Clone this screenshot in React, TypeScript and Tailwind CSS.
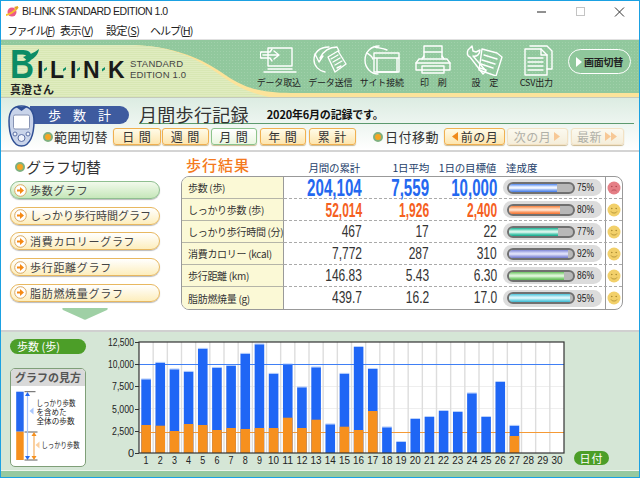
import React from "react";

const SANS = "font-['Noto_Sans_CJK_JP','Liberation_Sans',sans-serif]";

function Bullet() {
  return <span className="block w-[10px] h-[10px] rounded-full border-2 border-[#7fb07f] bg-[#f5a623] shrink-0" />;
}

function TopIcon({ name }: { name: string }) {
  const p = { fill: "none", stroke: "#ffffff", strokeWidth: 1.4, strokeLinejoin: "round" as const, strokeLinecap: "round" as const };
  return (
    <svg width="38" height="32" viewBox="0 0 38 32" className="block">
      {name === "in" && (
        <g {...p}>
          <path d="M8 4h24v18H8z" />
          <path d="M4 28h32M8 25h24" />
          <path d="M1 8h9l2-3M1 14h9l2 3" />
          <path d="M3 11h15M14 7l5 4-5 4" />
          <path d="M1 8c-1 2-1 4 0 6" />
        </g>
      )}
      {name === "out" && (
        <g {...p}>
          <path d="M18 3c-10 0-15 6-15 13 0 6 5 11 11 12" />
          <path d="M4 10l4 8 4-6M9 14c3-6 9-11 17-11l2 4" />
          <path d="M17 13l10-6 8 13-11 8z" />
          <path d="M20 15l7-4M22 18l7-4M24 21l7-4M26 24l4-2" />
        </g>
      )}
      {name === "site" && (
        <g {...p}>
          <path d="M16 2C8 2 2 8 2 16s6 14 13 14" />
          <path d="M4 9c3 2 5 3 6 6M12 3c3 1 8 1 12 3" />
          <path d="M11 9h25v19H11z" />
          <path d="M11 14h25M14 14v14h20V14" />
        </g>
      )}
      {name === "print" && (
        <g {...p}>
          <path d="M10 14V2h18v12" />
          <path d="M10 8h18" />
          <path d="M5 15h28l3 4v7H2v-7z" />
          <path d="M2 19h34M8 22v7h22v-7z" />
          <path d="M8 15l2-3M30 15l-2-3" />
        </g>
      )}
      {name === "set" && (
        <g {...p}>
          <path d="M16 5l15 4 5 4-6 19-17-6z" />
          <path d="M18 11l13 4M16 16l13 4M15 20l12 4M14 24l6 2" />
          <path d="M2 6l4-4 1 5 3 1 4-2c0 4-3 7-7 6L20 27l-3 3L4 13C1 12 1 9 2 6z" />
        </g>
      )}
      {name === "csv" && (
        <g {...p}>
          <path d="M13 2h17l5 5v18H30" />
          <path d="M8 5h16l6 6v20H8z" />
          <path d="M24 5v6h6" />
          <path d="M11 14h15M11 18h15M11 22h15M11 26h15" />
        </g>
      )}
    </svg>
  );
}

const tools = [
  ["データ取込", "in"],
  ["データ送信", "out"],
  ["サイト接続", "site"],
  ["印　刷", "print"],
  ["設　定", "set"],
  ["CSV出力", "csv"],
];

function Header() {
  return (
    <div className="relative h-[58px] flex shrink-0">
      <svg className="absolute inset-0" width="638" height="58" viewBox="0 40 638 58" preserveAspectRatio="none">
        <defs>
          <pattern id="dots" width="3" height="3" patternUnits="userSpaceOnUse">
            <rect width="3" height="3" fill="#91c89d" />
            <rect width="1" height="1" fill="#a0d0aa" />
          </pattern>
          <pattern id="lines" width="2" height="2" patternUnits="userSpaceOnUse">
            <rect width="2" height="2" fill="#e0ecc0" />
            <rect width="2" height="1" fill="#d8e7b4" />
          </pattern>
        </defs>
        <rect x="0" y="40" width="638" height="58" fill="url(#dots)" />
        <path d="M0 45H125C165 45 195 55 220 72C240 86 255 93 290 93H638V97H0Z" fill="#fce39a" />
        <path d="M0 45H125C165 45 190 55 215 72C235 86 245 92 268 97H0Z" fill="url(#lines)" />
        <rect x="0" y="97" width="638" height="1" fill="#c4c9bc" />
      </svg>
      <div className="relative w-[252px] shrink-0">
        <svg width="190" height="40" viewBox="0 46 190 40" className="block mt-[5px]">
          <text x="9" y="79" fontSize="40" fontWeight="700" fill="#0c8c66" textLength="24" lengthAdjust="spacingAndGlyphs" fontFamily="Liberation Sans">B</text>
          <path d="M22 58C27 56 33 54 38 50C37 56 33 60 27 62Z" fill="#0c8c66" />
          <g fontFamily="Liberation Sans" fontWeight="700" fontSize="23" fill="#1a1a1a">
            <text x="36" y="79">I</text>
            <text x="49" y="79">L</text>
            <text x="69" y="79">I</text>
            <text x="82" y="79">N</text>
            <text x="107" y="79">K</text>
          </g>
          <g fill="#0c8c66">
            <path d="M43 70l3-2v2.500l-3 2z" />
            <path d="M62 70l3-2v2.500l-3 2z" />
            <path d="M76 70l3-2v2.500l-3 2z" />
            <path d="M101 70l3-2v2.500l-3 2z" />
          </g>
          <g fontFamily="Liberation Sans" fontSize="9.500" fill="#444">
            <text x="129" y="68" textLength="53">STANDARD</text>
            <text x="129" y="79" textLength="56">EDITION 1.0</text>
          </g>
        </svg>
        <div className="pl-[9px] -mt-[1px] text-[11px] leading-[11px] font-bold text-[#222]">真澄さん</div>
      </div>
      <div className="relative flex pt-[4px]">
        {tools.map(([label, icon]) => (
          <div key={icon} className="w-[51.500px] flex flex-col items-center">
            <TopIcon name={icon} />
            <span className="mt-[1px] text-[9px] leading-[12px] text-[#222] whitespace-pre tracking-[-0.200px]">{label}</span>
          </div>
        ))}
      </div>
      <div className="relative ml-[6px] mt-[9px] w-[63px] h-[25px] rounded-full border-[1.500px] border-white bg-[#8fc79b] flex items-center justify-center gap-[2px]">
        <svg width="6" height="10" viewBox="0 0 6 10"><path d="M0 0l6 5-6 5z" fill="#fff" /></svg>
        <span className="text-[10px] font-bold text-[#222] tracking-[-0.300px] whitespace-nowrap">画面切替</span>
      </div>
    </div>
  );
}

function Btn({ w, kind, children, ml = 0 }: { w: number; kind?: "on" | "off"; children: React.ReactNode; ml?: number }) {
  const cls =
    kind === "on"
      ? "border-[#8cc48c] bg-[linear-gradient(#ffffff,#eaf6e0)] text-[#333]"
      : kind === "off"
        ? "border-[#f3e2c4] bg-[linear-gradient(#fbf9f0,#f5eeda)] text-[#b0b0a8]"
        : "border-[#f0b050] bg-[linear-gradient(#fffbe8,#fde5ae)] text-[#333]";
  return (
    <div
      style={{ width: w, marginLeft: ml }}
      className={`h-[17px] shrink-0 rounded-[3px] border shadow-[0_1px_1px_#c9b78f] flex items-center justify-center text-[12px] leading-none whitespace-nowrap tracking-[1px] ${cls}`}
    >
      {children}
    </div>
  );
}

function Tri({ dir, color, double }: { dir: "l" | "r"; color: string; double?: boolean }) {
  const d = dir === "l" ? "M7 0v9L1 4.500z" : "M0 0v9l6-4.500z";
  return (
    <svg width={double ? 13 : 7} height="9" viewBox={double ? "0 0 13 9" : "0 0 7 9"}>
      <path d={d} fill={color} />
      {double && <path d="M6 0v9l6-4.500z" fill={color} />}
    </svg>
  );
}

function Toolbar() {
  return (
    <div className="h-[52px] flex shrink-0 bg-[linear-gradient(#dcece2,#ffffff)]">
      <svg width="29" height="42" viewBox="0 0 29 42" className="relative z-10 ml-[6px] mt-[7px] -mr-[6px] shrink-0">
        <path d="M14.500 1C6 1 2 6 2 16c0 14 4 25 12.500 25S27 30 27 16C27 6 23 1 14.500 1Z" fill="#c9d4ea" stroke="#2f4f94" strokeWidth="1.500" />
        <path d="M9 2l5.500 4L20 2z" fill="#2f4f94" />
        <rect x="6.500" y="10" width="16" height="14" rx="1.500" fill="#ffffff" stroke="#8894b4" />
        <circle cx="14.500" cy="33" r="3.500" fill="#eef2fa" stroke="#5b6fa6" />
        <circle cx="8" cy="29" r="2" fill="#eef2fa" stroke="#5b6fa6" />
        <circle cx="21" cy="29" r="2" fill="#eef2fa" stroke="#5b6fa6" />
      </svg>
      <div className="flex-1 flex flex-col min-w-0">
        <div className="flex h-[26px] pt-[8px]">
          <div className="w-[99px] h-[18px] rounded-r-full bg-[#3e5b9f] text-white text-[13px] leading-[18px] flex items-center justify-center tracking-[12px] pl-[12px] whitespace-nowrap">歩数計</div>
          <div className="flex-1 ml-[10px] mr-[5px] border-b border-[#5c9a6e] flex items-center h-[18px]">
            <span className="text-[18px] leading-[17px] text-[#333] tracking-[0.300px] whitespace-nowrap">月間歩行記録</span>
            <span className="ml-[18px] text-[11px] font-bold text-[#111] whitespace-nowrap tracking-[-0.200px]">2020年6月の記録です。</span>
          </div>
        </div>
        <div className="flex items-center mt-[3px] pl-[13px]">
          <Bullet />
          <span className="ml-[1px] text-[13px] tracking-[0.500px] text-[#333] whitespace-nowrap">範囲切替</span>
          <Btn w={48} ml={5}>日 間</Btn>
          <Btn w={47} ml={1}>週 間</Btn>
          <Btn w={46} ml={2} kind="on">月 間</Btn>
          <Btn w={46} ml={3}>年 間</Btn>
          <Btn w={47} ml={3}>累 計</Btn>
          <span className="ml-[17px]"><Bullet /></span>
          <span className="ml-[2px] text-[13px] tracking-[0.500px] text-[#333] whitespace-nowrap">日付移動</span>
          <Btn w={61} ml={5}><span className="flex items-center gap-[3px] tracking-[0.500px]"><Tri dir="l" color="#f08a1c" />前の月</span></Btn>
          <Btn w={61} ml={2} kind="off"><span className="flex items-center gap-[3px] tracking-[0.500px]">次の月<Tri dir="r" color="#f7c896" /></span></Btn>
          <Btn w={53} ml={3} kind="off"><span className="flex items-center gap-[3px] tracking-[0.500px]">最新<Tri dir="r" color="#f7c896" double /></span></Btn>
        </div>
      </div>
    </div>
  );
}

const graphs = ["歩数グラフ", "しっかり歩行時間グラフ", "消費カロリーグラフ", "歩行距離グラフ", "脂肪燃焼量グラフ"];

function LeftPanel() {
  return (
    <div className="w-[180px] shrink-0 pl-[9px]">
      <div className="flex items-center h-[29px] pl-[5px] pt-[1px]">
        <Bullet />
        <span className="ml-[1px] text-[15px] text-[#333] tracking-[0px] whitespace-nowrap">グラフ切替</span>
      </div>
      <div className="flex flex-col gap-[7.700px]">
        {graphs.map((g, i) => (
          <div
            key={g}
            className={`w-[150px] h-[18px] rounded-full border flex items-center pl-[3px] shadow-[0_1px_1px_#bbbbbb] ${
              i === 0 ? "border-[#8fbf90] bg-[linear-gradient(#f2faec,#c6e7ba)]" : "border-[#e8b860] bg-[linear-gradient(#ffffff,#fdeebd)]"
            }`}
          >
            <svg width="13" height="13" viewBox="0 0 13 13" className="shrink-0">
              <circle cx="6.500" cy="6.500" r="5.800" fill="#fff" stroke="#d9a860" />
              <path d="M3 5.500h3V3l4 3.500L6 10V7.500H3z" fill="#f58a14" />
            </svg>
            <span className={`ml-[3px] text-[11px] text-[#444] whitespace-nowrap ${i === 1 ? "tracking-[0px]" : "tracking-[0.700px]"}`}>{g}</span>
          </div>
        ))}
      </div>
      <svg width="46" height="12" viewBox="0 0 46 12" className="block ml-[52px] mt-[6px]">
        <path d="M1 0h44c1 0 1 1 0 2L25 11c-1 1-3 1-4 0L1 2C0 1 0 0 1 0z" fill="#9fd0a5" />
      </svg>
    </div>
  );
}

type Row = {
  label: string;
  a: string;
  b: string;
  c: string;
  pct: number;
  tone: "blue" | "orange" | "plain";
  fill: string;
  sad?: boolean;
};

const rows: Row[] = [
  { label: "歩数 (歩)", a: "204,104", b: "7,559", c: "10,000", pct: 75, tone: "blue", fill: "bg-[linear-gradient(#4f86ee,#cfe0ff_30%,#ffffff_50%,#9fbdf6_70%,#3f78e8)]", sad: true },
  { label: "しっかり歩数 (歩)", a: "52,014", b: "1,926", c: "2,400", pct: 80, tone: "orange", fill: "bg-[linear-gradient(#f57f3c,#ffd2b2_35%,#ffe8d8_50%,#fb9f6a_75%,#f07030)]" },
  { label: "しっかり歩行時間 (分)", a: "467", b: "17", c: "22", pct: 77, tone: "plain", fill: "bg-[linear-gradient(#16b496,#bdeee0_35%,#e8faf4_50%,#5fd0b8_75%,#10a88c)]" },
  { label: "消費カロリー (kcal)", a: "7,772", b: "287", c: "310", pct: 92, tone: "plain", fill: "bg-[linear-gradient(#7f86d6,#cfd2f5_35%,#e6e8fb_50%,#a6abe6_75%,#7078cc)]" },
  { label: "歩行距離 (km)", a: "146.83", b: "5.43", c: "6.30", pct: 86, tone: "plain", fill: "bg-[linear-gradient(#6cc462,#cdeec6_35%,#e8f8e4_50%,#93d88a_75%,#5cb852)]" },
  { label: "脂肪燃焼量 (g)", a: "439.7", b: "16.2", c: "17.0", pct: 95, tone: "plain", fill: "bg-[linear-gradient(#4cc4da,#c4eef6_35%,#e8fafd_50%,#82d8e8_75%,#3cb8d0)]" },
];

function Num({ v, tone }: { v: string; tone: Row["tone"] }) {
  const cls =
    tone === "blue"
      ? "text-[24px] font-bold text-[#2468f0] scale-x-[0.63]"
      : tone === "orange"
        ? "text-[20px] font-bold text-[#f5601e] scale-x-[0.6]"
        : "text-[16px] text-[#333] scale-x-[0.75]";
  return <span className={`font-['Liberation_Sans',sans-serif] leading-none origin-right inline-block whitespace-nowrap ${cls}`}>{v}</span>;
}

function Face({ sad }: { sad?: boolean }) {
  return (
    <svg width="14" height="14" viewBox="0 0 14 14">
      <circle cx="7" cy="7" r="6.500" fill={sad ? "#e57f86" : "#f2d06a"} />
      <circle cx="4.800" cy="5.500" r="0.800" fill={sad ? "#b04850" : "#a98a30"} />
      <circle cx="9.200" cy="5.500" r="0.800" fill={sad ? "#b04850" : "#a98a30"} />
      <path d={sad ? "M4.500 10C5.500 8.500 8.500 8.500 9.500 10" : "M4 8.500C5 10.500 9 10.500 10 8.500"} fill="none" stroke={sad ? "#b04850" : "#a98a30"} strokeWidth="0.800" />
    </svg>
  );
}

function Results() {
  return (
    <div className="w-[442px] shrink-0">
      <div className="flex h-[24px] items-end text-[10.500px] leading-[16px] text-[#24406a] whitespace-nowrap tracking-[-0.200px]">
        <span className="w-[102px] pl-[5px] text-[15px] leading-[22px] font-medium text-[#f47a20] tracking-[1px]">歩行結果</span>
        <span className="w-[77px] text-right">月間の累計</span>
        <span className="w-[69px] text-right">1日平均</span>
        <span className="w-[67px] text-right">1日の目標値</span>
        <span className="ml-[10px] tracking-[0px]">達成度</span>
      </div>
      <div className="h-[134px] grid grid-rows-6 rounded-[8px] border border-[#999999] overflow-hidden">
        {rows.map((r, i) => (
          <div key={r.label} className="flex min-h-0">
            <div className={`w-[102px] shrink-0 bg-[#fbf9d6] border-r border-[#9a9a9a] flex items-center pl-[6px] text-[10px] text-[#333] whitespace-nowrap tracking-[-0.300px] ${i < 5 ? "border-b border-b-[#b5b5a8]" : ""}`}>
              {r.label}
            </div>
            <div className={`flex-1 flex items-center min-w-0 ${i < 5 ? "border-b border-dashed border-[#aaaaaa]" : ""}`}>
              <div className="w-[78px] flex justify-end"><Num v={r.a} tone={r.tone} /></div>
              <div className="w-[67px] flex justify-end"><Num v={r.b} tone={r.tone} /></div>
              <div className="w-[68px] flex justify-end"><Num v={r.c} tone={r.tone} /></div>
              <div className="ml-[6px] w-[99px] h-[17px] rounded-full bg-[#dcdcdc] flex items-center pl-[4px] shrink-0">
                <div className="w-[68px] h-[12px] rounded-full border-2 border-[#707070] bg-[#b8b8b8] overflow-hidden shrink-0">
                  <div className={`h-full ${r.fill}`} style={{ width: `${r.pct}%` }} />
                </div>
                <span className="ml-[2px] text-[10px] font-['Liberation_Sans',sans-serif] text-[#222] inline-block origin-left scale-x-[0.85] whitespace-nowrap">{r.pct}%</span>
              </div>
              <div className="ml-[3px] self-stretch border-l border-[#9a9a9a] flex-1 flex items-center justify-center">
                <Face sad={r.sad} />
              </div>
            </div>
          </div>
        ))}
      </div>
    </div>
  );
}

const bars: [number, number?][] = [
  [378.3, 424], [361.7, 424.7], [368.3, 430], [370.7, 423], [347.7, 424], [366.7, 429], [364.7, 427], [352.7, 428], [343.3, 427], [372.7, 427],
  [363.3, 416.7], [386.3, 427], [366.3, 418.7], [423.3], [372.7, 425.7], [346, 429], [368, 410], [426.3], [441], [418], [416], [410], [411], [392.3], [416], [381], [424.7, 435],
];

function Chart() {
  const L = 140, R = 565, T = 341, B = 452;
  const col = (R - L) / 30;
  const yLabels: [string, number][] = [["12,500", 341], ["10,000", 363.2], ["7,500", 385.4], ["5,000", 407.6], ["2,500", 429.8], ["0", 452]];
  return (
    <svg width="470" height="133" viewBox="102 335 470 133" className="block shrink-0">
      <rect x={L} y={T} width={R - L} height={B - T} fill="#fff" />
      {[385.5, 407.5].map((y) => <line key={y} x1={L} x2={R} y1={y} y2={y} stroke="#eeeeee" />)}
      {Array.from({ length: 29 }, (_, i) => (
        <line key={i} x1={L + col * (i + 1)} x2={L + col * (i + 1)} y1={T} y2={B} stroke="#dddddd" strokeWidth="1.400" />
      ))}
      <line x1={L} x2={R} y1="363.5" y2="363.5" stroke="#3f7ff5" />
      <line x1={L} x2={R} y1="431.5" y2="431.5" stroke="#f59a35" />
      {bars.map(([top, or], i) => {
        const x = L + col * i + 2.3;
        return (
          <g key={i}>
            <rect x={x} y={top} width={9.6} height={B - top} fill="#1f66f5" />
            <rect x={x} y={top - 0.8} width={9.6} height={0.8} fill="#a9c6fb" />
            {or !== undefined && <rect x={x} y={or} width={9.6} height={B - or} fill="#f6901e" />}
          </g>
        );
      })}
      <rect x={L} y={T} width={R - L} height={B - T} fill="none" stroke="#333333" strokeWidth="1.200" />
      <g fontFamily="Liberation Sans" fontSize="11" fill="#222">
        {yLabels.map(([t, y]) => (
          <g key={t}>
            <text x="135" y={y + 4} textAnchor="end" textLength={t === "0" ? undefined : t.length === 6 ? 26 : 22} lengthAdjust="spacingAndGlyphs">{t}</text>
            <line x1="136" x2={L} y1={Math.round(y) + 0.5} y2={Math.round(y) + 0.5} stroke="#333" />
          </g>
        ))}
        {Array.from({ length: 30 }, (_, i) => (
          <text key={i} x={L + col * (i + 0.5)} y="463" textAnchor="middle" textLength={i < 9 ? 5 : 11} lengthAdjust="spacingAndGlyphs">{i + 1}</text>
        ))}
      </g>
    </svg>
  );
}

function Legend() {
  return (
    <div className="w-[76px] h-[99px] rounded-[5px] border-[1.500px] border-[#7f9f78] bg-white overflow-hidden mt-[14px]">
      <div className="h-[17px] bg-[#d9d9d9] text-[11px] leading-[17px] font-bold text-[#555] text-center whitespace-nowrap tracking-[0px]">グラフの見方</div>
      <svg width="74" height="80" viewBox="11.500 386 74 80" className="block">
        <rect x="16.700" y="391.700" width="7.500" height="40" fill="#2468f0" />
        <rect x="16.700" y="431.700" width="7.500" height="28.300" fill="#f6901e" />
        <path d="M25 391.700h11M25 432h13M25 460h13" stroke="#333" strokeWidth="0.800" />
        <path d="M28 395v62" stroke="#a9c6fb" strokeWidth="1.200" />
        <path d="M25.500 396l2.500-4 2.500 4zM25.500 456l2.500 4 2.500-4z" fill="#2468f0" />
        <path d="M34.500 436v20" stroke="#f6b060" strokeWidth="1.200" />
        <path d="M32 436l2.500-4 2.500 4zM32 456l2.500 4 2.500-4z" fill="#f6901e" />
        <path d="M34 407.500v7l-4-3.500z" fill="#a9c6fb" />
        <path d="M40 441.500v7l-4-3.500z" fill="#fbcf9f" />
        <g fontSize="7.500" fill="#222" fontFamily="Noto Sans CJK JP">
          <text x="37" y="406" textLength="39" lengthAdjust="spacingAndGlyphs">しっかり歩数</text>
          <text x="37" y="415" textLength="30" lengthAdjust="spacingAndGlyphs">を含めた</text>
          <text x="37" y="424" textLength="38" lengthAdjust="spacingAndGlyphs">全体の歩数</text>
          <text x="42" y="448" textLength="38" lengthAdjust="spacingAndGlyphs">しっかり歩数</text>
        </g>
      </svg>
    </div>
  );
}

export default function App() {
  return (
    <div className={`w-[640px] h-[478px] border border-[#1ba1e2] bg-white flex flex-col overflow-hidden ${SANS}`}>
      <div className="h-[21px] flex items-center shrink-0 pl-[4px] pr-[14px]">
        <svg width="14" height="14" viewBox="0 0 14 14" className="shrink-0">
          <circle cx="7" cy="7" r="4.500" fill="#ec5a86" />
          <path d="M1 10C4 10 10 6 13 2" stroke="#f5c12e" strokeWidth="2" fill="none" />
          <path d="M9 2l4-1-1 4z" fill="#e0a020" />
        </svg>
        <span className="ml-[3px] font-['Liberation_Sans',sans-serif] text-[10.500px] text-[#222] whitespace-nowrap tracking-[-0.500px]">BI-LINK STANDARD EDITION 1.0</span>
        <svg width="88" height="12" viewBox="0 0 88 12" className="ml-auto shrink-0">
          <path d="M0 6h9" stroke="#222" strokeWidth="1" />
          <rect x="39.500" y="1.500" width="8" height="8" fill="none" stroke="#c4c4c4" />
          <path d="M78 1.500l9 9M87 1.500l-9 9" stroke="#333" strokeWidth="1" />
        </svg>
      </div>
      <div className="h-[17px] flex items-center shrink-0 pl-[6px] text-[11px] text-[#222] whitespace-nowrap tracking-[-0.500px]">
        <span className="w-[53px] tracking-[-1.500px]">ファイル(<u>F</u>)</span>
        <span className="w-[46px]">表示(<u>V</u>)</span>
        <span className="w-[44px]">設定(<u>S</u>)</span>
        <span className="tracking-[-1px]">ヘルプ(<u>H</u>)</span>
      </div>
      <div className="h-[1px] bg-[#e0e0e0] shrink-0" />
      <Header />
      <Toolbar />
      <div className="h-[180px] shrink-0 flex border-t-2 border-[#d4d4d4]">
        <LeftPanel />
        <Results />
      </div>
      <div className="flex-1 min-h-0 flex border-t-2 border-[#d0d0d0] bg-[#d5e6d6]">
        <div className="w-[100px] shrink-0 pl-[9px] pt-[7px]">
          <div className="w-[76px] h-[15px] rounded-full bg-[#4c9e28] text-white text-[11px] leading-[15px] pl-[7px] whitespace-nowrap">歩数 (歩)</div>
          <Legend />
        </div>
        <div className="mt-[4px]"><Chart /></div>
        <div className="mt-[119px] ml-[3px] w-[35px] h-[14px] rounded-full bg-[#4c9e28] text-white text-[11px] leading-[14px] text-center tracking-[1px] shrink-0">日付</div>
      </div>
      <div className="h-[1px] bg-[#eef5ee] shrink-0" />
      <div className="h-[6px] bg-[#96c9a0] shrink-0" />
    </div>
  );
}
